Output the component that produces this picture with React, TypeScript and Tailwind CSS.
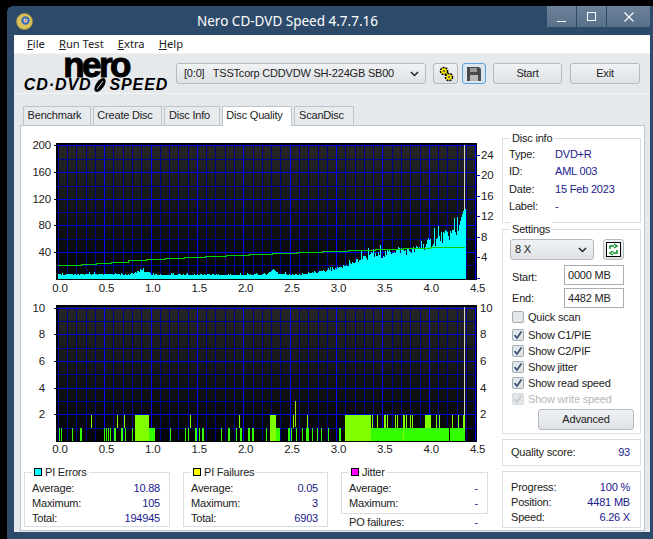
import { ReactNode } from 'react';

const rnd = (i: number) => {
    const v = Math.sin(i * 12.9898) * 43758.5453;
    return v - Math.floor(v);
};

// x px -> height px of the PI errors envelope
const ENVELOPE: [number, number][] = [
    [58, 5.5], [130, 5], [137, 8], [142, 9], [148, 6], [155, 4.5], [260, 4.5], [268, 6], [273, 11], [278, 6],
    [290, 4.5], [300, 4.5], [310, 6], [330, 9], [340, 12], [350, 16], [360, 21], [370, 24], [385, 27], [395, 31],
    [410, 30], [420, 33], [430, 39], [445, 46], [455, 50], [459, 54], [460, 58], [461, 62], [463, 68], [465, 70],
];

// stepped read speed line, [x end, y]
const SPEED_STEPS: [number, number][] = [
    [58, 265], [67, 265], [81, 264], [96, 263], [111, 262], [128, 260], [146, 259], [165, 258], [184, 257],
    [205, 256], [226, 255], [249, 254], [272, 253], [297, 252], [322, 251], [348, 250], [375, 249], [403, 248], [430, 247], [464, 246],
];

const LOW_BARS: [number, number][] = [
    [59, 60], [61, 62], [72, 73], [80, 82], [104, 105], [106, 107], [108, 109], [110, 111], [114, 116], [121, 123], [125, 126],
    [132, 133], [146, 155], [170, 171], [185, 186], [188, 189], [195, 197], [199, 200], [202, 204], [221, 222], [228, 230],
    [236, 237], [240, 242], [248, 250], [252, 254], [266, 267], [275, 280], [278, 279], [288, 290], [291, 292], [296, 297],
    [302, 303], [306, 309], [312, 313], [317, 318], [321, 322], [328, 329], [339, 341],
];
const MID_BARS: [number, number][] = [
    [91, 92], [117, 118], [124, 125], [135, 149], [190, 191], [239, 240], [270, 276], [293, 294], [307, 308],
    [345, 371], [372, 373], [377, 378], [384, 386], [387, 388], [395, 396], [397, 398], [403, 405], [406, 407], [410, 411],
    [412, 413], [425, 431], [436, 437], [439, 440], [452, 453], [458, 459], [463, 465],
];

function interp(x: number) {
    for (let i = 1; i < ENVELOPE.length; i++) {
        const [x0, h0] = ENVELOPE[i - 1];
        const [x1, h1] = ENVELOPE[i];
        if (x <= x1) return h0 + ((h1 - h0) * (x - x0)) / (x1 - x0);
    }
    return 0;
}

function errorsPath() {
    let d = '';
    for (let x = 58; x <= 465; x++) {
        const e = interp(x);
        const spike = rnd(x + 7) > 0.88 ? 1.25 : 1;
        const h = x >= 459 ? e : e * (0.8 + 0.28 * rnd(x)) * spike;
        d += `M${x + 0.5} 279V${(279 - h).toFixed(1)}`;
    }
    return d;
}

function PlotGrid({ top, hMajor, hMinor, id }: { top: number; hMajor: number[]; hMinor: number[]; id: string }) {
    const bottom = top + 136;
    const verticals = Array.from({ length: 46 }, (_, i) => i);
    return (
        <g shapeRendering="crispEdges">
            <defs>
                <linearGradient id={id} x1="0" y1="0" x2="0" y2="1">
                    <stop offset="0" stopColor="#262626" />
                    <stop offset="1" stopColor="#040404" />
                </linearGradient>
            </defs>
            <rect x={56} y={top} width={421} height={136.5} fill="#000" />
            <rect x={58} y={top + 2} width={418} height={134} fill={`url(#${id})`} />
            {verticals.map((i) => {
                const x = Math.round(57.7 + i * 9.28);
                return <line key={i} x1={x + 0.5} x2={x + 0.5} y1={top + 2} y2={bottom} stroke={i % 5 === 0 && i > 0 ? '#0000ff' : '#000088'} />;
            })}
            {hMinor.map((y) => <line key={y} x1={57} x2={476} y1={y + 0.5} y2={y + 0.5} stroke="#000090" />)}
            {hMajor.map((y) => <line key={y} x1={57} x2={476} y1={y + 0.5} y2={y + 0.5} stroke="#0000e8" />)}
        </g>
    );
}

function XLabels({ y }: { y: number }) {
    return (
        <g>
            {['0.0', '0.5', '1.0', '1.5', '2.0', '2.5', '3.0', '3.5', '4.0', '4.5'].map((t, i) => (
                <text key={t} x={60 + i * 46.4} y={y} textAnchor="middle" fontSize={11.5} fill="#222">{t}</text>
            ))}
        </g>
    );
}

function ErrorsChart() {
    const speed = SPEED_STEPS.map(([x, y], i) => `${i === 0 ? 'M' : 'L'}${x} ${y}.5${i < SPEED_STEPS.length - 1 ? `H${SPEED_STEPS[i + 1][0]}` : ''}`).join('');
    return (
        <svg width={480} height={162} viewBox="21 135 480 162" className="block">
            <PlotGrid id="errs" top={143} hMajor={[145, 172, 199, 225, 252]} hMinor={[159, 186, 212, 239, 265]} />
            <line x1={464.5} x2={464.5} y1={145} y2={279} stroke="#d4d4d4" />
            <path d={errorsPath()} stroke="#00ffff" strokeWidth={1} fill="none" shapeRendering="crispEdges" />
            <path d={speed} stroke="#00d000" strokeWidth={1} fill="none" shapeRendering="crispEdges" />
            {[['200', 145], ['160', 172], ['120', 199], ['80', 225], ['40', 252]].map(([t, y]) => (
                <g key={t}>
                    <text x={51} y={Number(y) + 4} textAnchor="end" fontSize={11.5} fill="#222">{t}</text>
                    <line x1={54} x2={57} y1={Number(y) + 0.5} y2={Number(y) + 0.5} stroke="#000" />
                </g>
            ))}
            {[['24', 155], ['20', 175], ['16', 196], ['12', 216], ['8', 237], ['4', 257]].map(([t, y]) => (
                <g key={t}>
                    <text x={481} y={Number(y) + 4} fontSize={11.5} fill="#222">{t}</text>
                    <line x1={477} x2={480} y1={Number(y) + 0.5} y2={Number(y) + 0.5} stroke="#0000c0" />
                </g>
            ))}
            <line x1={477} x2={480} y1={278.5} y2={278.5} stroke="#0000c0" />
            <XLabels y={292} />
        </svg>
    );
}

function FailuresChart() {
    return (
        <svg width={480} height={162} viewBox="21 297 480 162" className="block">
            <PlotGrid id="fails" top={305} hMajor={[308, 334, 361, 388, 414]} hMinor={[321, 348, 374, 401, 428]} />
            <line x1={464.5} x2={464.5} y1={307} y2={441} stroke="#d4d4d4" />
            <g shapeRendering="crispEdges">
                {LOW_BARS.map(([a, b]) => <rect key={a} x={a} y={427.5} width={b - a} height={13.5} fill="#33ff00" />)}
                <rect x={345} y={427.5} width={17} height={13.5} fill="#80ff00" />
                <rect x={362} y={427.5} width={103} height={13.5} fill="#33ff00" />
                <rect x={449} y={427.5} width={1} height={13.5} fill="#000" />
                <rect x={403} y={427.5} width={1} height={13.5} fill="#80ff00" />
                {MID_BARS.map(([a, b]) => <rect key={`m${a}`} x={a} y={414.5} width={Math.max(b - a, 1)} height={a === 135 || a === 345 || a === 270 ? 26.5 : 13} fill="#80ff00" />)}
                <rect x={135} y={427.5} width={11} height={13.5} fill="#80ff00" />
                <rect x={295} y={401} width={1} height={26} fill="#a0e000" />
            </g>
            {[['10', 308], ['8', 334], ['6', 361], ['4', 388], ['2', 414]].map(([t, y]) => (
                <g key={t}>
                    <text x={45} y={Number(y) + 4} textAnchor="end" fontSize={11.5} fill="#222">{t}</text>
                    <line x1={54} x2={57} y1={Number(y) + 0.5} y2={Number(y) + 0.5} stroke="#000" />
                </g>
            ))}
            {[['10', 308], ['8', 334], ['6', 361], ['4', 388], ['2', 414]].map(([t, y]) => (
                <text key={t} x={480} y={Number(y) + 4} fontSize={11.5} fill="#222">{t}</text>
            ))}
            <XLabels y={453} />
        </svg>
    );
}

function GroupBox({ title, swatch, className, children }: { title: string; swatch?: string; className: string; children: ReactNode }) {
    return (
        <div className={`relative border border-[#d8dee4] ${className}`}>
            <div className="absolute -top-[8px] left-[7px] flex items-center gap-[3px] bg-white px-[2px] leading-[14px] text-[#222]">
                {swatch && <span className={`h-[8px] w-[8px] border border-black ${swatch}`} />}
                {title}
            </div>
            {children}
        </div>
    );
}

function StatRow({ label, value }: { label: string; value: string }) {
    return (
        <div className="flex h-[15px] items-center justify-between leading-[15px]">
            <span className="text-[#222]">{label}</span>
            <span className="text-[#20208c]">{value}</span>
        </div>
    );
}

function DiscRow({ label, value }: { label: string; value: string }) {
    return (
        <div className="flex h-[17.6px] items-center">
            <span className="w-[46px] text-[#222]">{label}</span>
            <span className="text-[#20208c]">{value}</span>
        </div>
    );
}

function Check({ label, checked = true, disabled = false }: { label: string; checked?: boolean; disabled?: boolean }) {
    return (
        <div className={`flex h-[16px] items-center gap-[4px] ${disabled ? 'text-[#b4b8bc]' : 'text-[#222]'}`}>
            <span className={`flex h-[12px] w-[12px] items-center justify-center rounded-[2px] border bg-[#e4e7ea] ${disabled ? 'border-[#d4d8dc]' : 'border-[#a4abb2]'}`}>
                {checked && (
                    <svg width="10" height="10" viewBox="0 0 10 10">
                        <path d="M1.5 5.2 4 8 8.5 1.5" fill="none" stroke={disabled ? '#c4c8cc' : '#3c5a78'} strokeWidth="1.8" />
                    </svg>
                )}
            </span>
            {label}
        </div>
    );
}

function Chevron() {
    return (
        <svg width="9" height="6" viewBox="0 0 9 6">
            <path d="M1 1l3.5 3.5L8 1" fill="none" stroke="#222" strokeWidth="1.5" />
        </svg>
    );
}

const btn = 'flex items-center rounded-[3px] border border-[#b4babf] bg-gradient-to-b from-[#f0f2f4] to-[#dfe2e5] text-[#222]';

function Tab({ label, width, active }: { label: string; width: string; active?: boolean }) {
    return (
        <div
            className={`flex items-center justify-center border border-b-0 border-[#bcc5cc] pr-[5px] ${width} ${active ? 'z-10 -mb-px h-[20px] bg-white pb-[2px]' : 'h-[19px] bg-[#e8ebee] pb-[1px]'}`}
        >
            {label}
        </div>
    );
}

function TitleButton({ width, children, last }: { width: string; children: ReactNode; last?: boolean }) {
    return (
        <div className={`flex h-[21px] items-center justify-center bg-gradient-to-b from-[#6c8299] to-[#587089] ${width} ${last ? 'rounded-br-[2px]' : 'rounded-b-none border-r border-[#2d4a6b]'}`}>
            {children}
        </div>
    );
}

export default function App() {
    return (
        <div className="h-[539px] w-[653px] overflow-hidden bg-black pl-[7px] pt-[6px] font-['Liberation_Sans',Arial,sans-serif] text-[11px] tracking-[-0.2px]">
            <div className="flex h-[533px] w-[646px] flex-col rounded-tl-[6px] bg-[#2d4a6b]">
                {/* title bar */}
                <div className="relative flex h-[29px] shrink-0 items-start pl-[9px]">
                    <svg width="17" height="17" viewBox="0 0 17 17" className="mt-[7px]">
                        <circle cx="8.5" cy="8.5" r="8" fill="#d9c25a" />
                        <circle cx="8.5" cy="8.5" r="8" fill="none" stroke="#a8913a" strokeWidth="0.7" />
                        <circle cx="9.5" cy="7.5" r="4.2" fill="#3f6fb8" />
                        <circle cx="9.5" cy="7.5" r="2" fill="#e8e4da" />
                        <circle cx="9.5" cy="7.5" r="0.9" fill="#c8402c" />
                    </svg>
                    <div className="absolute left-[190px] top-[5px] font-['Noto_Sans',sans-serif] text-[13.5px] leading-[20px] tracking-normal text-white">Nero CD-DVD Speed 4.7.7.16</div>
                    <div className="ml-auto mr-[3px] flex">
                        <TitleButton width="w-[30px]">
                            <span className="mt-[10px] h-px w-[9px] bg-white" />
                        </TitleButton>
                        <TitleButton width="w-[30px]">
                            <span className="h-[9px] w-[9px] border border-white" />
                        </TitleButton>
                        <TitleButton width="w-[43px]" last>
                            <svg width="10" height="10" viewBox="0 0 10 10">
                                <path d="M.5.5l9 9M9.5.5l-9 9" stroke="#fff" strokeWidth="1.1" />
                            </svg>
                        </TitleButton>
                    </div>
                </div>

                <div className="ml-[7px] flex h-[497px] w-[636px] flex-col bg-[#e6e9ec]">
                    {/* menu */}
                    <div className="flex h-[18px] shrink-0 items-center gap-[14px] bg-white pl-[13px] font-['Noto_Sans',sans-serif] text-[11.2px] tracking-normal text-[#222]">
                        <span><u>F</u>ile</span>
                        <span><u>R</u>un Test</span>
                        <span><u>E</u>xtra</span>
                        <span><u>H</u>elp</span>
                    </div>

                    {/* toolbar */}
                    <div className="flex h-[41px] shrink-0 items-center border-y border-[#f4f5f6] pl-[10px]">
                        <div className="flex w-[144px] flex-col items-center text-black">
                            <div className="h-[22px] text-[35px] font-bold leading-[17px] tracking-[-2.6px] [-webkit-text-stroke:1px_black]">nero</div>
                            <div className="flex h-[14px] items-center whitespace-nowrap text-[16px] font-bold italic leading-[14px] tracking-[0.9px]">
                                <span>CD·DVD</span>
                                <svg width="16" height="14" viewBox="0 0 16 14" className="mx-[1px]">
                                    <ellipse cx="8" cy="7" rx="4" ry="8" transform="rotate(35 8 7)" fill="#000" />
                                    <path d="M5 11 11 3" stroke="#e6e9ec" strokeWidth="1" />
                                </svg>
                                <span>SPEED</span>
                            </div>
                        </div>
                        <div className={`${btn} ml-[8px] h-[21px] w-[250px] justify-between pl-[7px] pr-[6px]`}>
                            <span className="whitespace-pre">[0:0]   TSSTcorp CDDVDW SH-224GB SB00</span>
                            <Chevron />
                        </div>
                        <div className={`${btn} ml-[7px] h-[21px] w-[25px] justify-center`}>
                            <svg width="18" height="18" viewBox="0 0 18 18">
                                <circle cx="7" cy="6" r="3.6" fill="#f2e400" stroke="#000" strokeWidth="1.5" strokeDasharray="2 1" />
                                <circle cx="12" cy="12" r="3.6" fill="#f2e400" stroke="#000" strokeWidth="1.5" strokeDasharray="2 1" />
                                <circle cx="7" cy="6" r="1.1" fill="#555" />
                                <circle cx="12" cy="12" r="1.1" fill="#555" />
                            </svg>
                        </div>
                        <div className="ml-[4px] flex h-[21px] w-[24px] items-center justify-center rounded-[3px] border border-[#5ea0dc] bg-[#d8e6f2]">
                            <svg width="14" height="14" viewBox="0 0 14 14">
                                <path d="M0 0h12l2 2v12H0z" fill="#4a4a4a" />
                                <rect x="3" y="1" width="7" height="4" fill="#9a9a9a" />
                                <rect x="3" y="8" width="8" height="6" fill="#b8b8b8" />
                            </svg>
                        </div>
                        <div className={`${btn} ml-[7px] h-[21px] w-[69px] justify-center`}>Start</div>
                        <div className={`${btn} ml-[8px] h-[21px] w-[70px] justify-center`}>Exit</div>
                    </div>

                    {/* tabs */}
                    <div className="mt-[12px] flex h-[19px] shrink-0 gap-[2px] pl-[9px] text-[#222]">
                        <Tab label="Benchmark" width="w-[68px]" />
                        <Tab label="Create Disc" width="w-[69px]" />
                        <Tab label="Disc Info" width="w-[56px]" />
                        <Tab label="Disc Quality" width="w-[70px]" active />
                        <Tab label="ScanDisc" width="w-[60px]" />
                    </div>

                    {/* panel */}
                    <div className="ml-[6px] flex h-[406px] w-[625px] border border-[#bcc5cc] bg-white">
                        <div className="w-[481px] shrink-0 pt-[9px]">
                            <ErrorsChart />
                            <FailuresChart />
                            <div className="ml-[3px] mt-[13px] flex items-start gap-[13px]">
                                <GroupBox title="PI Errors" swatch="bg-[#00ffff]" className="h-[55px] w-[146px] pl-[7px] pr-[9px] pt-[8px]">
                                    <StatRow label="Average:" value="10.88" />
                                    <StatRow label="Maximum:" value="105" />
                                    <StatRow label="Total:" value="194945" />
                                </GroupBox>
                                <GroupBox title="PI Failures" swatch="bg-[#ffff00]" className="h-[55px] w-[145px] pl-[7px] pr-[9px] pt-[8px]">
                                    <StatRow label="Average:" value="0.05" />
                                    <StatRow label="Maximum:" value="3" />
                                    <StatRow label="Total:" value="6903" />
                                </GroupBox>
                                <div className="w-[147px]">
                                    <GroupBox title="Jitter" swatch="bg-[#ff00ff]" className="h-[42px] pl-[7px] pr-[9px] pt-[8px]">
                                        <StatRow label="Average:" value="-" />
                                        <StatRow label="Maximum:" value="-" />
                                    </GroupBox>
                                    <div className="mt-[1px] pl-[8px] pr-[10px]">
                                        <StatRow label="PO failures:" value="-" />
                                    </div>
                                </div>
                            </div>
                        </div>

                        <div className="w-[139px] shrink-0 pt-[12px]">
                            <GroupBox title="Disc info" className="h-[85px] pl-[6px] pt-[6px]">
                                <DiscRow label="Type:" value="DVD+R" />
                                <DiscRow label="ID:" value="AML 003" />
                                <DiscRow label="Date:" value="15 Feb 2023" />
                                <DiscRow label="Label:" value="-" />
                            </GroupBox>
                            <GroupBox title="Settings" className="mt-[6px] h-[205px] pl-[7px] pt-[9px]">
                                <div className="flex items-center gap-[9px]">
                                    <div className={`${btn} h-[21px] w-[84px] justify-between pl-[4px] pr-[6px]`}>
                                        <span>8 X</span>
                                        <Chevron />
                                    </div>
                                    <div className={`${btn} h-[21px] w-[21px] justify-center`}>
                                        <svg width="15" height="15" viewBox="0 0 15 15">
                                            <rect x=".5" y=".5" width="14" height="14" fill="#fff" stroke="#000" />
                                            <path d="M4 7V4h4M8 2l3 2-3 2" fill="none" stroke="#0a8a2a" strokeWidth="1.5" />
                                            <path d="M11 8v3H7M7 9l-3 2 3 2" fill="none" stroke="#0a8a2a" strokeWidth="1.5" />
                                        </svg>
                                    </div>
                                </div>
                                <div className="mt-[5px] flex h-[20px] items-center text-[#222]">
                                    <span className="w-[54px] pl-[2px] pt-[4px]">Start:</span>
                                    <span className="flex h-[20px] w-[60px] items-center border border-[#a8aeb4] pl-[3px]">0000 MB</span>
                                </div>
                                <div className="mt-[3px] flex h-[20px] items-center text-[#222]">
                                    <span className="w-[54px] pl-[2px]">End:</span>
                                    <span className="flex h-[20px] w-[60px] items-center border border-[#a8aeb4] pl-[3px]">4482 MB</span>
                                </div>
                                <div className="mt-[1px] pl-[2px]">
                                    <Check label="Quick scan" checked={false} />
                                    <div className="h-[2px]" />
                                    <Check label="Show C1/PIE" />
                                    <Check label="Show C2/PIF" />
                                    <Check label="Show jitter" />
                                    <Check label="Show read speed" />
                                    <Check label="Show write speed" disabled />
                                </div>
                                <div className={`${btn} ml-[28px] mt-[2px] h-[21px] w-[96px] justify-center`}>Advanced</div>
                            </GroupBox>
                            <div className="mt-[5px] flex h-[27px] items-center justify-between border border-[#d8dee4] pl-[8px] pr-[10px]">
                                <span className="text-[#222]">Quality score:</span>
                                <span className="text-[#20208c]">93</span>
                            </div>
                            <div className="mt-[5px] h-[57px] border border-[#d8dee4] pl-[8px] pr-[10px] pt-[8px]">
                                <StatRow label="Progress:" value="100 %" />
                                <StatRow label="Position:" value="4481 MB" />
                                <StatRow label="Speed:" value="6.26 X" />
                            </div>
                        </div>
                    </div>
                </div>
            </div>
        </div>
    );
}
